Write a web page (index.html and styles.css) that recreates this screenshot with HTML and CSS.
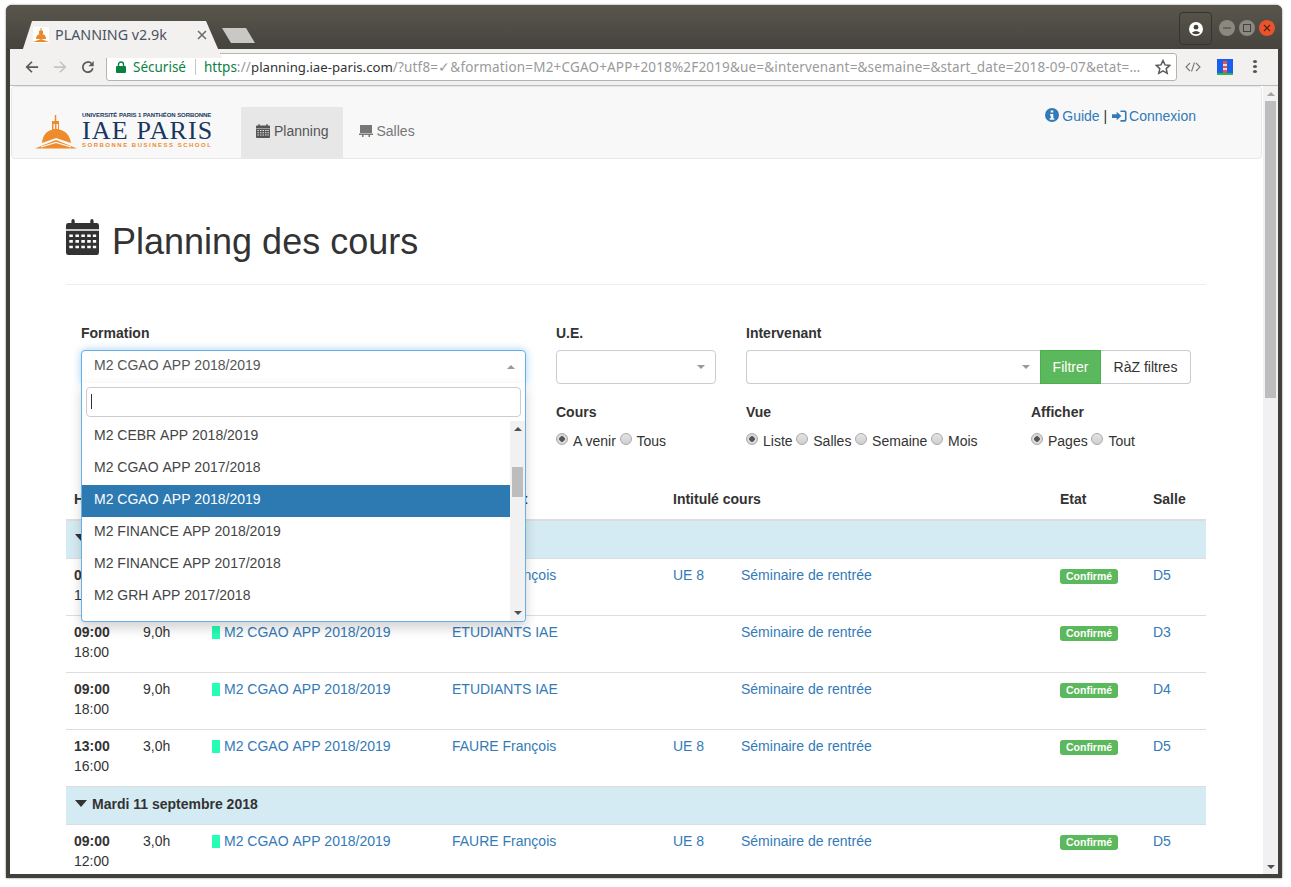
FILE: index.html
```html
<!DOCTYPE html>
<html lang="fr">
<head>
    <meta charset="UTF-8">
    <title>PLANNING v2.9k</title>
    <link rel="stylesheet" href="styles.css">
</head>
<body>
<div class="window">
    <!-- browser title bar -->
    <div class="titlebar">
        <div class="tab">
            <svg class="favicon" viewBox="0 0 16 16"><rect width="16" height="16" fill="#fff"/><path d="M8 1v3M6.5 4h3v3h-3z" stroke="#e98a2b" fill="#e98a2b"/><path d="M3 12q0-5 5-5t5 5z" fill="#e98a2b"/><path d="M0 15l8-3 8 3z" fill="#e98a2b"/></svg>
            <span class="tab-title">PLANNING v2.9k</span>
            <svg class="tab-close" viewBox="0 0 10 10"><path d="M1 1l8 8M9 1l-8 8" stroke="#6b6b6b" stroke-width="1.5"/></svg>
        </div>
        <div class="newtab"></div>
        <div class="titlebar-space"></div>
        <div class="account">
            <svg viewBox="0 0 14 14" width="14" height="14"><circle cx="7" cy="7" r="7" fill="#fff"/><circle cx="7" cy="5.2" r="2.4" fill="#45433e"/><path d="M2.8 10.8q4.2-3.4 8.4 0q-4.2 3-8.4 0z" fill="#45433e"/></svg>
        </div>
        <div class="winbtn"><svg viewBox="0 0 16 16"><path d="M4 8h8" stroke="#44423c" stroke-width="1.2"/></svg></div>
        <div class="winbtn"><svg viewBox="0 0 16 16"><rect x="4.5" y="4.5" width="7" height="7" fill="none" stroke="#44423c"/></svg></div>
        <div class="winbtn close"><svg viewBox="0 0 16 16"><path d="M5 5l6 6M11 5l-6 6" stroke="#5b2110" stroke-width="1.2"/></svg></div>
    </div>

    <!-- browser toolbar -->
    <div class="toolbar">
        <svg class="tool-icon" viewBox="0 0 16 16"><path d="M15 8H2M8 2L2 8l6 6" fill="none" stroke="#5a5a5a" stroke-width="2"/></svg>
        <svg class="tool-icon" viewBox="0 0 16 16"><path d="M1 8h13M8 2l6 6-6 6" fill="none" stroke="#c4c4c4" stroke-width="2"/></svg>
        <svg class="tool-icon" viewBox="0 0 16 16"><path d="M13.5 9.5A5.8 5.8 0 1 1 12 4" fill="none" stroke="#5a5a5a" stroke-width="2"/><path d="M14.5 1v6h-6z" fill="#5a5a5a"/></svg>
        <div class="omnibox">
            <svg class="lock" viewBox="0 0 10 12"><path d="M2.5 5V3.5a2.5 2.5 0 0 1 5 0V5" fill="none" stroke="#0b8043" stroke-width="1.4"/><rect y="5" width="10" height="7" rx="1" fill="#0b8043"/></svg>
            <span class="secure">Sécurisé</span>
            <span class="omni-sep"></span>
            <span class="url"><span class="url-https">https</span><span class="url-rest">://</span><span class="url-host">planning.iae-paris.com</span><span class="url-rest">/?utf8=✓&amp;formation=M2+CGAO+APP+2018%2F2019&amp;ue=&amp;intervenant=&amp;semaine=&amp;start_date=2018-09-07&amp;etat=…</span></span>
            <svg class="star" viewBox="0 0 16 16"><path d="M8 1.5l2 4.4 4.8.5-3.6 3.2 1 4.7L8 11.9l-4.2 2.4 1-4.7L1.2 6.4 6 5.900z" fill="none" stroke="#5a5a5a" stroke-width="1.5"/></svg>
        </div>
        <svg class="ext-code" viewBox="0 0 16 12"><path d="M5 2L1 6l4 4M11 2l4 4-4 4M9.500 1.500l-3 9" fill="none" stroke="#777" stroke-width="1.100"/></svg>
        <svg class="ext-light" viewBox="0 0 16 16"><rect width="16" height="16" fill="#1a5ff0"/><rect y="14" width="16" height="2" fill="#1db954"/><rect x="6" y="2" width="4" height="12" fill="#e8553f"/><rect x="6" y="5" width="4" height="2" fill="#f3d6c8"/><rect x="6" y="9" width="4" height="2" fill="#f3d6c8"/></svg>
        <div class="kebab"><i></i><i></i><i></i></div>
    </div>

    <!-- page -->
    <div class="viewport">
        <div class="page">
            <nav class="navbar">
                <a class="logo">
                    <svg class="logo-dome" viewBox="0 0 42 36"><path d="M20.500 1v6" stroke="#ee8c2c" stroke-width="1.500"/><path d="M17 7h7v9h-7z" fill="#ee8c2c"/><path d="M18.500 10h1.500v5h-1.500zM21.500 10H23v5h-1.500z" fill="#f8f8f8"/><path d="M7 29q1-13 14-14Q34 16 36 29L21 24z" fill="#ee8c2c"/><path d="M0 34.500L21 26 42 34.500z" fill="#ee8c2c"/><path d="M6 33l15-4.500L36 33" fill="none" stroke="#f8f8f8" stroke-width="1.200"/></svg>
                    <span class="logo-text">
                        <span class="logo-top">UNIVERSITÉ PARIS 1 PANTHÉON SORBONNE</span>
                        <span class="logo-main">IAE PARIS</span>
                        <span class="logo-sub">SORBONNE BUSINESS SCHOOL</span>
                    </span>
                </a>
                <ul class="nav-items">
                    <li class="active">
                        <svg class="nav-icon" viewBox="0 0 14 14"><use href="#cal"/></svg>Planning
                    </li>
                    <li class="second-item">
                        <svg class="nav-icon" viewBox="0 0 14 14"><path d="M1 1h12v8H1zM0 9.500h14V11H0zM3 11h1.500v2H3zM9.500 11H11v2H9.500z" fill="#777"/></svg>Salles
                    </li>
                </ul>
                <div class="nav-right">
                    <svg class="info-icon" viewBox="0 0 14 14"><circle cx="7" cy="7" r="7" fill="#337ab7"/><path d="M5.700 2.500h2.600v2H5.700zM5 6h3.300v4.200H9.300v1.500H4.700v-1.500h1.100V7.500H5z" fill="#f8f8f8"/></svg>
                    <a>Guide</a> <span class="nav-sep">|</span>
                    <svg class="login-icon" viewBox="0 0 16 14"><path d="M0 5h5V2.500L10 7l-5 4.500V9H0zM9 1h4.500Q15.500 1 15.500 3v8q0 2-2 2H9v-1.800h4q.8 0 .8-.8V3.600q0-.8-.8-.8H9z" fill="#337ab7"/></svg><a>Connexion</a>
                </div>
            </nav>

            <div class="container">
                <div class="page-header">
                    <svg class="title-icon" viewBox="0 0 14 14" preserveAspectRatio="none"><use href="#cal"/></svg>
                    <h1>Planning des cours</h1>
                </div>

                <form class="filters">
                    <div class="filter-row">
                        <div class="field field-formation">
                            <label>Formation</label>
                            <div class="select open">
                                <span class="select-value">M2 CGAO APP 2018/2019</span>
                                <span class="caret-up"></span>
                                <div class="dropdown">
                                    <div class="search-wrap"><div class="search-box"><span class="text-cursor"></span></div></div>
                                    <div class="dropdown-body">
                                        <ul class="options">
                                            <li>M2 CEBR APP 2018/2019</li>
                                            <li>M2 CGAO APP 2017/2018</li>
                                            <li class="selected">M2 CGAO APP 2018/2019</li>
                                            <li>M2 FINANCE APP 2018/2019</li>
                                            <li>M2 FINANCE APP 2017/2018</li>
                                            <li>M2 GRH APP 2017/2018</li>
                                        </ul>
                                        <div class="mini-scroll">
                                            <span class="arrow-up small"></span>
                                            <span class="mini-thumb"></span>
                                            <span class="arrow-down small"></span>
                                        </div>
                                    </div>
                                </div>
                            </div>
                        </div>
                        <div class="field field-ue">
                            <label>U.E.</label>
                            <div class="select"><span class="caret-down"></span></div>
                        </div>
                        <div class="field field-interv">
                            <label>Intervenant</label>
                            <div class="input-group">
                                <div class="select grouped"><span class="caret-down"></span></div>
                                <button type="button" class="btn btn-success">Filtrer</button>
                                <button type="button" class="btn btn-default">RàZ filtres</button>
                            </div>
                        </div>
                    </div>
                    <div class="filter-row second">
                        <div class="field field-formation"></div>
                        <div class="field field-ue">
                            <label>Cours</label>
                            <div class="radios">
                                <input type="radio" name="cours" checked><span>A venir</span>
                                <input type="radio" name="cours"><span>Tous</span>
                            </div>
                        </div>
                        <div class="field field-vue">
                            <label>Vue</label>
                            <div class="radios">
                                <input type="radio" name="vue" checked><span>Liste</span>
                                <input type="radio" name="vue"><span>Salles</span>
                                <input type="radio" name="vue"><span>Semaine</span>
                                <input type="radio" name="vue"><span>Mois</span>
                            </div>
                        </div>
                        <div class="field">
                            <label>Afficher</label>
                            <div class="radios">
                                <input type="radio" name="aff" checked><span>Pages</span>
                                <input type="radio" name="aff"><span>Tout</span>
                            </div>
                        </div>
                    </div>
                </form>

                <table class="planning">
                    <colgroup>
                        <col class="c-h"><col class="c-d"><col class="c-f"><col class="c-i"><col class="c-u"><col class="c-t"><col class="c-e"><col class="c-s">
                    </colgroup>
                    <thead>
                        <tr>
                            <th>Heure</th><th>Durée</th><th>Formation</th><th>Intervenant</th>
                            <th colspan="2">Intitulé cours</th><th>Etat</th><th>Salle</th>
                        </tr>
                    </thead>
                    <tbody>
                        <tr class="day"><td colspan="8"><span class="day-caret"></span>Lundi 10 septembre 2018</td></tr>
                        <tr>
                            <td><b>09:00</b><br>12:00</td><td>3,0h</td>
                            <td><span class="swatch"></span><a class="formation-link">M2 CGAO APP 2018/2019</a></td>
                            <td><a>FAURE François</a></td><td><a>UE 8</a></td><td><a>Séminaire de rentrée</a></td>
                            <td><span class="badge">Confirmé</span></td><td><a>D5</a></td>
                        </tr>
                        <tr>
                            <td><b>09:00</b><br>18:00</td><td>9,0h</td>
                            <td><span class="swatch"></span><a class="formation-link">M2 CGAO APP 2018/2019</a></td>
                            <td><a>ETUDIANTS IAE</a></td><td></td><td><a>Séminaire de rentrée</a></td>
                            <td><span class="badge">Confirmé</span></td><td><a>D3</a></td>
                        </tr>
                        <tr>
                            <td><b>09:00</b><br>18:00</td><td>9,0h</td>
                            <td><span class="swatch"></span><a class="formation-link">M2 CGAO APP 2018/2019</a></td>
                            <td><a>ETUDIANTS IAE</a></td><td></td><td><a>Séminaire de rentrée</a></td>
                            <td><span class="badge">Confirmé</span></td><td><a>D4</a></td>
                        </tr>
                        <tr>
                            <td><b>13:00</b><br>16:00</td><td>3,0h</td>
                            <td><span class="swatch"></span><a class="formation-link">M2 CGAO APP 2018/2019</a></td>
                            <td><a>FAURE François</a></td><td><a>UE 8</a></td><td><a>Séminaire de rentrée</a></td>
                            <td><span class="badge">Confirmé</span></td><td><a>D5</a></td>
                        </tr>
                        <tr class="day"><td colspan="8"><span class="day-caret"></span>Mardi 11 septembre 2018</td></tr>
                        <tr>
                            <td><b>09:00</b><br>12:00</td><td>3,0h</td>
                            <td><span class="swatch"></span><a class="formation-link">M2 CGAO APP 2018/2019</a></td>
                            <td><a>FAURE François</a></td><td><a>UE 8</a></td><td><a>Séminaire de rentrée</a></td>
                            <td><span class="badge">Confirmé</span></td><td><a>D5</a></td>
                        </tr>
                    </tbody>
                </table>
            </div>
        </div>
        <div class="scrollbar">
            <span class="arrow-up"></span>
            <span class="thumb"></span>
            <span class="scroll-space"></span>
            <span class="arrow-down"></span>
        </div>
    </div>
</div>

<svg class="defs" width="0" height="0">
    <symbol id="cal" viewBox="0 0 14 14" preserveAspectRatio="none">
        <path fill="currentColor" fill-rule="evenodd" d="M0 2.500Q0 1.600 1 1.600H2.300V.8Q2.300 0 3 0T3.700.8V1.600H10.300V.8Q10.300 0 11 0T11.700.8V1.600H13Q14 1.600 14 2.500V4H0ZM0 4.600H14V13Q14 14 13 14H1Q0 14 0 13ZM1.400 6V7H2.900V6ZM4 6V7H5.500V6ZM6.500 6V7H8V6ZM9 6V7H10.500V6ZM11.400 6V7H12.800V6ZM1.400 8.200V9.200H2.900V8.200ZM4 8.200V9.200H5.500V8.200ZM6.500 8.200V9.200H8V8.200ZM9 8.200V9.200H10.500V8.200ZM11.400 8.200V9.200H12.800V8.200ZM1.400 10.400V11.400H2.900V10.400ZM4 10.400V11.400H5.500V10.400ZM6.500 10.400V11.400H8V10.400ZM9 10.400V11.400H10.500V10.400ZM11.400 10.400V11.400H12.800V10.400Z"/>
    </symbol>
</svg>
</body>
</html>
```

FILE: styles.css
```css
* {
    box-sizing: border-box;
}
html, body {
    height: 100%;
}
body {
    margin: 0;
    background-color: #fff;
    color: #333;
    font-family: "Liberation Sans", Arial, sans-serif;
    font-size: 14px;
    line-height: 20px;
    overflow: hidden;
}
a {
    color: #337ab7;
}
ul {
    list-style: none;
    margin: 0;
    padding: 0;
}
.defs {
    position: absolute;
}

/* browser window */
.window {
    width: 1276px;
    height: 873px;
    margin: 5px 0 0 6px;
    padding: 0 4px 4px;
    border-radius: 6px 6px 0 0;
    background: #41403a;
    display: flex;
    flex-direction: column;
    overflow: hidden;
    box-shadow: 0 0 2px rgba(0, 0, 0, 0.6);
}
.titlebar {
    height: 44px;
    margin: 0 -4px;
    padding: 7px 7px 0 14px;
    background: linear-gradient(#5a564d, #45433d);
    display: flex;
    align-items: flex-start;
    flex: none;
}
.tab {
    width: 202px;
    height: 37px;
    margin-top: 9px;
    padding: 0 15px 9px 13px;
    background: #f2f1f0;
    clip-path: polygon(0 100%, 12px 0, 186px 0, 202px 100%);
    display: flex;
    align-items: center;
    font-family: "Noto Sans", sans-serif;
    font-size: 14.3px;
    color: #4a5360;
}
.favicon {
    width: 16px;
    height: 16px;
    margin-right: 6px;
}
.tab-title {
    flex: 1;
}
.tab-close {
    width: 10px;
    height: 10px;
}
.newtab {
    width: 33px;
    height: 15px;
    margin-top: 16px;
    background: #c9c8c5;
    clip-path: polygon(0 0, 24px 0, 33px 100%, 9px 100%);
}
.titlebar-space {
    flex: 1;
}
.account {
    width: 33px;
    height: 33px;
    border: 1px solid #35342f;
    border-radius: 4px;
    display: flex;
    align-items: center;
    justify-content: center;
    margin-right: 3px;
}
.winbtn {
    width: 16px;
    height: 16px;
    margin: 8px 0 0 4px;
    border-radius: 50%;
    background: #8b8880;
}
.winbtn svg {
    display: block;
}
.winbtn.close {
    background: #e9542c;
}
.toolbar {
    height: 37px;
    padding: 4px 0 0 15px;
    background: #f2f1f0;
    border-bottom: 1px solid #bdbcba;
    display: flex;
    align-items: flex-start;
    flex: none;
}
.tool-icon {
    width: 14px;
    height: 14px;
    margin: 7px 14px 0 0;
}
.omnibox {
    width: 1071px;
    height: 28px;
    margin-left: -3px;
    padding: 0 5px 0 9px;
    background: #fff;
    border: 1px solid #b5b4b2;
    border-radius: 3px;
    display: flex;
    align-items: center;
    font-family: "Noto Sans", sans-serif;
    font-size: 13.5px;
    white-space: nowrap;
    overflow: hidden;
}
.lock {
    width: 10px;
    height: 12px;
    margin-right: 7px;
    flex: none;
}
.secure {
    color: #0b8043;
}
.omni-sep {
    width: 1px;
    height: 16px;
    margin: 0 8px 0 9px;
    background: #c4c4c4;
}
.url {
    flex: 1;
    overflow: hidden;
    color: #9a9a9a;
}
.url-https {
    color: #0b8043;
}
.url-host {
    color: #333;
    font-size: 13.2px;
}
.url-rest {
    letter-spacing: 0.17px;
}
.star {
    width: 16px;
    height: 16px;
    flex: none;
    margin-left: 6px;
}
.ext-code {
    width: 16px;
    height: 12px;
    margin: 8px 0 0 8px;
}
.ext-light {
    width: 16px;
    height: 16px;
    margin: 6px 0 0 16px;
}
.kebab {
    width: 4px;
    margin: 7px 0 0 20px;
    display: flex;
    flex-direction: column;
    gap: 2px;
}
.kebab i {
    height: 3px;
    border-radius: 50%;
    background: #555;
}

/* page */
.viewport {
    flex: 1;
    min-height: 0;
    background: #fff;
    display: flex;
}
.page {
    flex: 1;
    min-width: 0;
    overflow: hidden;
    padding-left: 1px;
}
.scrollbar {
    width: 15px;
    background: #f1f1f1;
    display: flex;
    flex-direction: column;
    align-items: center;
    flex: none;
    padding: 6px 0 5px;
}
.arrow-up, .arrow-down {
    width: 0;
    height: 0;
    border-left: 4px solid transparent;
    border-right: 4px solid transparent;
}
.arrow-up {
    border-bottom: 4px solid #a3a3a3;
}
.arrow-down {
    border-top: 4px solid #505050;
}
.arrow-up.small {
    border-bottom-color: #505050;
}
.thumb {
    width: 11px;
    height: 297px;
    margin-top: 5px;
    background: #bdbdbd;
}
.scroll-space {
    flex: 1;
}

/* navbar */
.navbar {
    width: 1251px;
    height: 73px;
    padding-left: 23px;
    background: #f8f8f8;
    border: 1px solid #e7e7e7;
    border-radius: 4px;
    display: flex;
    align-items: flex-start;
    position: relative;
}
.logo {
    width: 206px;
    display: flex;
    align-items: flex-start;
    padding-top: 27px;
}
.logo-dome {
    width: 42px;
    height: 36px;
    flex: none;
}
.logo-text {
    width: 131px;
    margin-left: 5px;
    display: flex;
    flex-direction: column;
    color: #17375e;
    white-space: nowrap;
}
.logo-top {
    font-size: 6px;
    font-weight: bold;
    line-height: 7px;
    letter-spacing: -0.07px;
    margin-top: -2px;
}
.logo-main {
    font-family: "Liberation Serif", serif;
    font-size: 26px;
    line-height: 24px;
    letter-spacing: 1.15px;
}
.logo-sub {
    font-size: 6px;
    line-height: 7px;
    color: #ee8c2c;
    letter-spacing: 1.5px;
    font-weight: bold;
    margin-top: -1px;
}
.nav-items {
    display: flex;
    margin-top: 20px;
}
.nav-items li {
    height: 51px;
    padding: 0 14px 4px;
    color: #777;
    display: flex;
    align-items: center;
}
.nav-items li.active {
    padding-left: 15px;
    background: #e7e7e7;
    color: #555;
}
.nav-items li.second-item {
    padding-left: 16px;
}
.nav-icon {
    width: 14px;
    height: 14px;
    margin-right: 4px;
    color: #555;
}
.nav-right {
    position: absolute;
    right: 65px;
    top: 19px;
    color: #337ab7;
    white-space: nowrap;
}
.info-icon {
    width: 14px;
    height: 14px;
    margin-right: -1px;
    vertical-align: -1px;
}
.nav-sep {
    color: #333;
}
.login-icon {
    width: 15px;
    height: 14px;
    vertical-align: -2px;
    margin: 0 2px 0 1px;
}

/* main */
.container {
    width: 1140px;
    margin-left: 55px;
}
.page-header {
    margin-top: 60px;
    padding-bottom: 19px;
    border-bottom: 1px solid #eee;
    display: flex;
    align-items: center;
    height: 66px;
}
.title-icon {
    width: 33px;
    height: 36px;
    margin: -10px 13px 0 0;
    color: #333;
}
h1 {
    margin: 0;
    font-size: 36px;
    font-weight: normal;
    line-height: 40px;
}
.filters {
    padding: 38px 15px 0;
}
label {
    display: block;
    font-weight: bold;
    margin-bottom: 7px;
}
.filter-row {
    display: flex;
    gap: 30px;
}
.filter-row.second {
    margin-top: 18px;
}
.field-formation {
    width: 445px;
}
.field-ue {
    width: 160px;
}
.field-interv {
    width: 445px;
}
.field-vue {
    width: 255px;
}
.select {
    height: 34px;
    padding: 4px 12px;
    background: #fff;
    border: 1px solid #ccc;
    border-radius: 4px;
    color: #555;
    position: relative;
}
.select-value, .options, .formation-link {
    font-kerning: none;
}
.select.open {
    border-color: #66afe9;
    border-radius: 4px 4px 0 0;
    box-shadow: 0 0 8px rgba(102, 175, 233, 0.6);
}
.caret-up, .caret-down {
    position: absolute;
    right: 10px;
    top: 14px;
    width: 0;
    height: 0;
    border-left: 4px solid transparent;
    border-right: 4px solid transparent;
}
.caret-up {
    border-bottom: 4px solid #999;
}
.caret-down {
    border-top: 4px solid #999;
}
.dropdown {
    position: absolute;
    left: -1px;
    right: -1px;
    top: 32px;
    height: 239px;
    background: #fff;
    border: 1px solid #66afe9;
    border-top: none;
    border-radius: 0 0 4px 4px;
    box-shadow: 0 6px 12px rgba(0, 0, 0, 0.175);
    z-index: 5;
    overflow: hidden;
}
.search-wrap {
    padding: 4px 4px 4px;
}
.search-box {
    height: 30px;
    border: 1px solid #ccc;
    border-radius: 4px;
    padding: 6px 4px;
}
.text-cursor {
    display: block;
    width: 1px;
    height: 15px;
    background: #333;
}
.dropdown-body {
    display: flex;
    height: 200px;
}
.options {
    flex: 1;
    color: #444;
}
.options li {
    height: 32px;
    padding: 4px 12px;
}
.options li.selected {
    background: #2d79b2;
    color: #fff;
}
.mini-scroll {
    width: 15px;
    background: #f1f1f1;
    display: flex;
    flex-direction: column;
    align-items: center;
    padding-top: 6px;
    position: relative;
}
.mini-thumb {
    position: absolute;
    top: 46px;
    left: 2px;
    width: 11px;
    height: 30px;
    background: #bdbdbd;
}
.mini-scroll .arrow-down {
    position: absolute;
    bottom: 6px;
}
.input-group {
    display: flex;
}
.select.grouped {
    flex: 1;
    border-radius: 4px 0 0 4px;
    border-right: none;
}
.btn {
    height: 34px;
    padding: 0;
    border: 1px solid #ccc;
    font-family: inherit;
    font-size: 14px;
    line-height: 20px;
    flex: none;
}
.btn-success {
    width: 61px;
    background: #5cb85c;
    border-color: #4cae4c;
    color: #fff;
}
.btn-default {
    width: 90px;
    background: #fff;
    border-left: none;
    color: #333;
    border-radius: 0 4px 4px 0;
}
.radios {
    display: flex;
    align-items: center;
    height: 20px;
    margin-top: 9px;
}
.radios input {
    appearance: none;
    width: 12px;
    height: 12px;
    margin: -5px 5px 0 0;
    border: 1px solid #a9a9a9;
    border-radius: 50%;
    background: linear-gradient(#e4e4e4, #cfcfcf);
    flex: none;
}
.radios input:checked {
    background: radial-gradient(circle, #555 0, #555 2.5px, #d8d8d8 3px);
}
.radios span {
    margin-right: 3.7px;
}

/* table */
.planning {
    width: 1140px;
    margin-top: 32px;
    border-collapse: collapse;
    table-layout: fixed;
}
.c-h, .c-d { width: 69px; }
.c-f { width: 240px; }
.c-i { width: 221px; }
.c-u { width: 68px; }
.c-t { width: 319px; }
.c-e { width: 93px; }
.c-s { width: 61px; }
.planning th {
    padding: 6px 8px 10px;
    text-align: left;
    border-bottom: 2px solid #ddd;
}
.planning td {
    padding: 6px 8px 10px;
    vertical-align: top;
    border-top: 1px solid #ddd;
}
.planning .day td {
    padding: 7px 8px 10px;
    background: #d5ebf3;
    font-weight: bold;
}
.day-caret {
    display: inline-block;
    width: 0;
    height: 0;
    margin: 0 5px 2px 1px;
    border-left: 6px solid transparent;
    border-right: 6px solid transparent;
    border-top: 7px solid #333;
}
.swatch {
    display: inline-block;
    width: 8px;
    height: 13px;
    margin-right: 4px;
    background: #26fdb5;
    vertical-align: -2px;
}
.badge {
    display: inline-block;
    padding: 0 6px 1px;
    background: #5cb85c;
    color: #fff;
    font-size: 10.5px;
    font-weight: bold;
    line-height: 14px;
    border-radius: 3px;
    vertical-align: 0;
}
```
